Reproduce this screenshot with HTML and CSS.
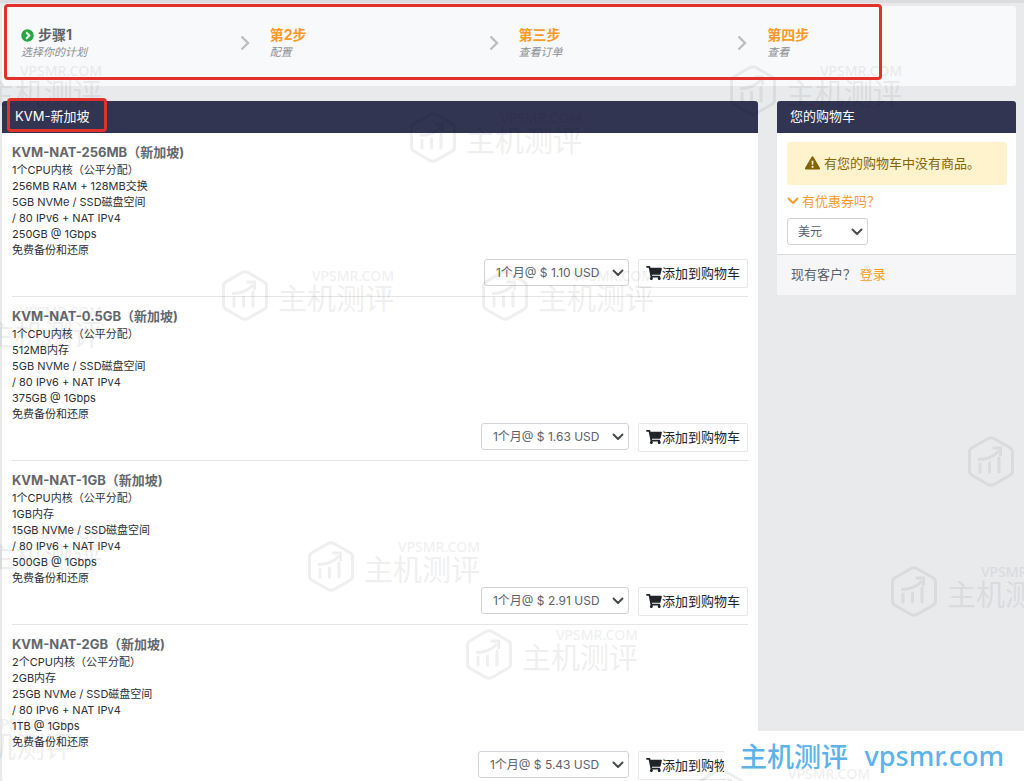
FILE: index.html
```html
<!DOCTYPE html>
<html lang="zh-CN">
<head>
<meta charset="utf-8">
<title>KVM-新加坡</title>
<link rel="stylesheet" href="styles.css">
</head>
<body>
<svg class="defs" aria-hidden="true">
  <symbol id="chevron-right" viewBox="0 0 10 16"><path d="M1.5 1.5 8 8l-6.500 6.500" fill="none" stroke="currentColor" stroke-width="2.400"/></symbol>
  <symbol id="chevron-down" viewBox="0 0 12 8"><path d="M1.500 1.500 6 6l4.500-4.500" fill="none" stroke="currentColor" stroke-width="1.900" stroke-linecap="round" stroke-linejoin="round"/></symbol>
  <symbol id="cart" viewBox="0 0 576 512"><path fill="currentColor" d="M528.100 301.300l47.300-208C578.800 78.300 567.400 64 552 64H159.200l-9.200-44.800C147.800 8 137.900 0 126.500 0H24C10.700 0 0 10.700 0 24v16c0 13.300 10.700 24 24 24h69.900l70.200 343.400C147.300 417.100 136 435.200 136 456c0 30.900 25.100 56 56 56s56-25.100 56-56c0-15.700-6.400-29.800-16.800-40h209.600C430.400 426.200 424 440.300 424 456c0 30.900 25.100 56 56 56s56-25.100 56-56c0-22.200-12.900-41.300-31.600-50.400l5.500-24.300c3.400-15-8-29.300-23.400-29.300H218.100l-6.500-32h293.100c11.200 0 20.900-7.800 23.400-18.700z"/></symbol>
  <symbol id="hex" viewBox="0 0 46 51"><g fill="none" stroke="currentColor" stroke-linejoin="round"><path stroke-width="3" d="M20.500 2.300q2.500-1.300 5 0l16.500 9.500q2.500 1.500 2.500 4v19.400q0 2.500-2.500 4l-16.500 9.500q-2.500 1.300-5 0L4 39.200q-2.500-1.500-2.500-4V15.800q0-2.500 2.500-4z"/><path stroke-width="3" d="M10 23.500c10 0 16-3 21-8.500"/><path stroke-width="3" stroke-linecap="round" d="M12 28v8M21.500 27v9M31 22v14"/></g><path fill="currentColor" d="M24.500 10.500H34v9.500h-3v-6.500h-6.500z"/></symbol>
</svg>
<div class="page">
  <ol class="steps">
    <li class="step current">
      <div>
        <strong class="step-title"><svg class="step-icon" viewBox="0 0 14 14"><circle cx="7" cy="7" r="6.700" fill="#28a745"/><path d="M5.500 3.500 9 7l-3.500 3.500" fill="none" stroke="#fff" stroke-width="2"/></svg>步骤1</strong>
        <em class="step-note">选择你的计划</em>
      </div>
      <svg class="step-arrow"><use href="#chevron-right"/></svg>
    </li>
    <li class="step">
      <div><strong class="step-title">第2步</strong><em class="step-note">配置</em></div>
      <svg class="step-arrow"><use href="#chevron-right"/></svg>
    </li>
    <li class="step">
      <div><strong class="step-title">第三步</strong><em class="step-note">查看订单</em></div>
      <svg class="step-arrow"><use href="#chevron-right"/></svg>
    </li>
    <li class="step">
      <div><strong class="step-title">第四步</strong><em class="step-note">查看</em></div>
    </li>
  </ol>

  <div class="columns">
    <main class="panel plans">
      <h1 class="panel-head">KVM-新加坡</h1>
      <section class="plan">
        <h2 class="plan-title">KVM-NAT-256MB（新加坡)</h2>
        <p class="plan-specs">1个CPU内核（公平分配）<br>256MB RAM + 128MB交换<br>5GB NVMe / SSD磁盘空间<br>/ 80 IPv6 + NAT IPv4<br>250GB @ 1Gbps<br>免费备份和还原</p>
        <div class="plan-order">
          <span class="select"><select aria-label="KVM-NAT-256MB 付款周期"><option>1个月@ $ 1.10 USD</option></select><svg><use href="#chevron-down"/></svg></span>
          <button class="add" type="button"><svg><use href="#cart"/></svg>添加到购物车</button>
        </div>
      </section>
      <section class="plan">
        <h2 class="plan-title">KVM-NAT-0.5GB（新加坡)</h2>
        <p class="plan-specs">1个CPU内核（公平分配）<br>512MB内存<br>5GB NVMe / SSD磁盘空间<br>/ 80 IPv6 + NAT IPv4<br>375GB @ 1Gbps<br>免费备份和还原</p>
        <div class="plan-order">
          <span class="select"><select aria-label="KVM-NAT-0.5GB 付款周期"><option>1个月@ $ 1.63 USD</option></select><svg><use href="#chevron-down"/></svg></span>
          <button class="add" type="button"><svg><use href="#cart"/></svg>添加到购物车</button>
        </div>
      </section>
      <section class="plan">
        <h2 class="plan-title">KVM-NAT-1GB（新加坡)</h2>
        <p class="plan-specs">1个CPU内核（公平分配）<br>1GB内存<br>15GB NVMe / SSD磁盘空间<br>/ 80 IPv6 + NAT IPv4<br>500GB @ 1Gbps<br>免费备份和还原</p>
        <div class="plan-order">
          <span class="select"><select aria-label="KVM-NAT-1GB 付款周期"><option>1个月@ $ 2.91 USD</option></select><svg><use href="#chevron-down"/></svg></span>
          <button class="add" type="button"><svg><use href="#cart"/></svg>添加到购物车</button>
        </div>
      </section>
      <section class="plan">
        <h2 class="plan-title">KVM-NAT-2GB（新加坡)</h2>
        <p class="plan-specs">2个CPU内核（公平分配）<br>2GB内存<br>25GB NVMe / SSD磁盘空间<br>/ 80 IPv6 + NAT IPv4<br>1TB @ 1Gbps<br>免费备份和还原</p>
        <div class="plan-order">
          <span class="select"><select aria-label="KVM-NAT-2GB 付款周期"><option>1个月@ $ 5.43 USD</option></select><svg><use href="#chevron-down"/></svg></span>
          <button class="add" type="button"><svg><use href="#cart"/></svg>添加到购物车</button>
        </div>
      </section>
    </main>

    <aside class="panel">
      <h2 class="panel-head">您的购物车</h2>
      <div class="cart-body">
        <p class="alert"><svg viewBox="0 0 16 14"><path fill="#856404" d="M6.900.7a1.300 1.300 0 0 1 2.200 0l6.700 11.400a1.200 1.200 0 0 1-1.100 1.900H1.300a1.200 1.200 0 0 1-1.100-1.900z"/><path fill="#fff3cd" d="M7 4.500h2l-.3 4.300H7.300z"/><circle cx="8" cy="11" r="1.200" fill="#fff3cd"/></svg>有您的购物车中没有商品。</p>
        <a class="coupon" href="#coupon"><svg><use href="#chevron-down"/></svg>有优惠券吗？</a>
        <span class="select currency"><select aria-label="货币"><option>美元</option></select><svg><use href="#chevron-down"/></svg></span>
      </div>
      <p class="cart-foot">现有客户？ <a href="#login">登录</a></p>
    </aside>
  </div>

  <div class="marks" aria-hidden="true">
    <div class="mark m1"><svg><use href="#hex"/></svg><div><span>VPSMR.COM</span><b>主机测评</b></div></div>
    <div class="mark m2"><svg><use href="#hex"/></svg><div><span>VPSMR.COM</span><b>主机测评</b></div></div>
    <div class="mark m3"><svg><use href="#hex"/></svg><div><span>VPSMR.COM</span><b>主机测评</b></div></div>
    <div class="mark m4"><svg><use href="#hex"/></svg><div><span>VPSMR.COM</span><b>主机测评</b></div></div>
    <div class="mark m5"><svg><use href="#hex"/></svg><div><span>VPSMR.COM</span><b>主机测评</b></div></div>
    <div class="mark m6"><svg><use href="#hex"/></svg><div><span>VPSMR.COM</span><b>主机测评</b></div></div>
    <div class="mark m7"><svg><use href="#hex"/></svg><div><span>VPSMR.COM</span><b>主机测评</b></div></div>
    <div class="mark m8"><svg><use href="#hex"/></svg></div>
    <div class="mark m9"><svg><use href="#hex"/></svg><div><span>VPSMR.COM</span><b>主机测评</b></div></div>
    <div class="mark m10"><svg><use href="#hex"/></svg><div><span>VPSMR.COM</span><b>主机测评</b></div></div>
    <div class="mark m11"><svg><use href="#hex"/></svg><div><span>VPSMR.COM</span><b>主机测评</b></div></div>
    <div class="mark m12"><svg><use href="#hex"/></svg><div><span>VPSMR.COM</span><b>主机测评</b></div></div>
    <div class="brand"><span>主机测评</span><span>vpsmr.com</span></div>
    <div class="mark m13"><svg><use href="#hex"/></svg><div><span>VPSMR.COM</span></div></div>
    <div class="frame frame-steps"></div>
    <div class="frame frame-title"></div>
  </div>
</div>
</body>
</html>
```
FILE: styles.css
```css
* { box-sizing: border-box; }
body {
  margin: 0;
  background: #e8eaec;
  color: #2c3035;
  font-family: Inter, "Noto Sans CJK SC", sans-serif;
  font-size: 13px;
}
h1, h2, p, ol { margin: 0; padding: 0; }
a { color: #fd9a24; text-decoration: none; }
.defs { position: absolute; width: 0; height: 0; }
.page {
  position: relative;
  display: flex;
  flex-direction: column;
  min-height: 100vh;
  padding: 3px 8px 0 2px;
  border-top: 3px solid #dcdcde;
}

.steps {
  display: grid;
  grid-template-columns: repeat(4, 1fr);
  height: 80px;
  padding-left: 19px;
  border-radius: 3px;
  background: #f8f9fb;
  list-style: none;
}
.step {
  display: flex;
  justify-content: space-between;
  padding: 20px 20px 0 0;
}
.step-title {
  display: flex;
  align-items: center;
  gap: 4px;
  color: #fd9a24;
  font-size: 14px;
  line-height: 18px;
}
.current .step-title { color: #5f6266; }
.step-icon { width: 13px; height: 13px; }
.step-note {
  display: block;
  color: #8c8e91;
  font-size: 11px;
  line-height: 16px;
}
.step-arrow { width: 10px; height: 16px; margin-top: 9px; color: #bcbec0; }

.columns {
  flex: 1;
  display: grid;
  grid-template-columns: minmax(0, 1fr) 239px;
  gap: 19px;
  margin-top: 15px;
  align-items: start;
}
.panel { border-radius: 3px; overflow: hidden; background: #fff; }
.plans { align-self: stretch; }
.panel-head {
  padding: 0 13px 1px;
  background: #323552;
  color: #fff;
  font-size: 13px;
  font-weight: 400;
  line-height: 31px;
}

.plan {
  margin: 0 10px;
  padding: 10px 0 8px;
  border-bottom: 1px solid #e4e5e6;
}
.plan:last-child { padding-bottom: 0; border-bottom: 0; }
.plan-title {
  color: #63676c;
  font-size: 13px;
  font-weight: 700;
  line-height: 19px;
}
.plan-specs { font-size: 11px; line-height: 16px; }
.plan-order {
  display: flex;
  justify-content: flex-end;
  gap: 9px;
  margin-top: 1px;
}
.select { position: relative; display: inline-flex; align-self: flex-start; }
.select select {
  appearance: none;
  height: 27px;
  padding: 0 28px 0 11px;
  border: 1px solid #d0d3d7;
  border-radius: 3px;
  background: #fff;
  color: #5c6168;
  font: inherit;
  font-size: 12px;
}
.select svg {
  position: absolute;
  right: 5px;
  top: 10px;
  width: 12px;
  height: 8px;
  color: #43474c;
  pointer-events: none;
}
.add {
  display: flex;
  align-items: center;
  height: 29px;
  padding: 0 7px 2px;
  border: 1px solid #e6e7e9;
  border-radius: 2px;
  background: #fff;
  color: #212529;
  font: inherit;
}
.add svg { width: 16px; height: 14px; }

.cart-body { padding: 9px 9px 9px 10px; }
.alert {
  display: flex;
  align-items: center;
  gap: 4px;
  height: 43px;
  padding: 0 18px 2px;
  border-radius: 3px;
  background: #fff3cd;
  color: #856404;
}
.alert svg { flex: none; width: 15px; height: 14px; }
.coupon {
  display: flex;
  align-items: center;
  gap: 3px;
  margin: 6px 0 7px;
  line-height: 20px;
}
.coupon svg { width: 12px; height: 8px; }
.currency select { width: 81px; padding-left: 10px; }
.cart-foot {
  padding: 0 14px 2px;
  border-top: 1px solid #dadbdd;
  background: #f6f6f8;
  color: #5c6066;
  line-height: 38px;
}

.marks {
  position: absolute;
  inset: -3px 0 0;
  overflow: hidden;
  pointer-events: none;
}
.mark {
  position: absolute;
  display: flex;
  gap: 10px;
  width: 172px;
  color: #000;
  opacity: 0.06;
  font-family: "Noto Sans", "Noto Sans CJK SC", sans-serif;
}
.mark > svg { flex: none; width: 46px; height: 51px; }
.mark > div { flex: 1; }
.mark span {
  display: block;
  font-size: 14px;
  font-weight: 500;
  line-height: 12px;
  text-align: right;
}
.mark b {
  display: block;
  font-size: 29px;
  font-weight: 400;
  line-height: 33px;
  white-space: nowrap;
}
.m1 { left: 730px; top: 65px; }
.m2 { left: 410px; top: 112px; }
.m3 { left: 222px; top: 270px; }
.m4 { left: 482px; top: 270px; }
.m5 { left: 308px; top: 541px; }
.m6 { left: 466px; top: 629px; }
.m7 { left: 891px; top: 566px; }
.m8 { left: 968px; top: 436px; }
.m9 { left: -70px; top: 65px; }
.m10 { left: -70px; top: 306px; }
.m11 { left: -70px; top: 528px; }
.m12 { left: -98px; top: 718px; }
.m13 { left: 698px; top: 768px; }

.brand {
  position: absolute;
  right: 0;
  bottom: 0;
  display: flex;
  align-items: center;
  justify-content: space-between;
  width: 300px;
  height: 50px;
  padding: 0 20px 2px 16px;
  background: #fff;
  color: #5cb3ea;
  font-family: "Noto Sans", "Noto Sans CJK SC", sans-serif;
  font-size: 27px;
  font-weight: 500;
}

.frame {
  position: absolute;
  border: 3px solid #e2302b;
  border-radius: 4px;
}
.frame-steps { left: 4px; top: 4px; width: 878px; height: 76px; }
.frame-title { left: 7px; top: 98px; width: 100px; height: 34px; }
```
